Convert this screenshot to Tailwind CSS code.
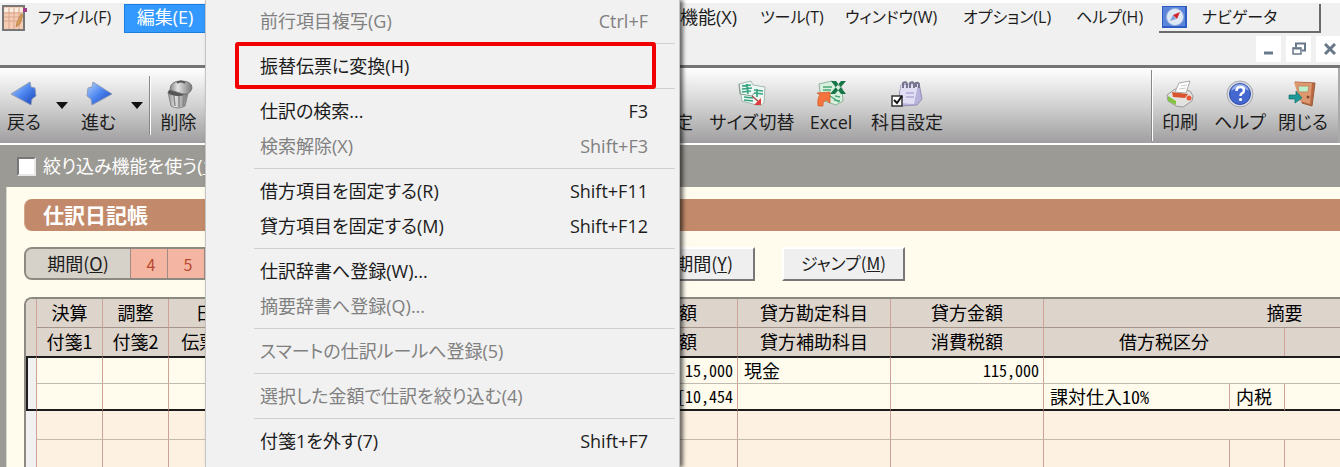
<!DOCTYPE html>
<html lang="ja">
<head>
<meta charset="utf-8">
<title>仕訳日記帳</title>
<script src="https://cdn.jsdelivr.net/npm/@tailwindcss/browser@4"></script>
</head>
<body class="relative flex h-screen flex-col overflow-hidden bg-[#9c9a94] font-['Open_Sans','Noto_Sans_CJK_JP',sans-serif] text-[18px] leading-6 text-[#1c1c1c] [font-feature-settings:'palt']">

<!-- Menu bar -->
<header class="shrink-0 border-b-3 border-[#757575] border-t-3 border-t-white bg-[#f0f0f0]">
  <nav class="flex h-[30px] items-center whitespace-nowrap text-[16px]" aria-label="メニューバー">
    <svg class="ml-[2px] w-[25px] shrink-0" viewBox="0 0 25 27">
      <rect x="1" y="1" width="21" height="24" fill="#f5cdb5" stroke="#777" stroke-width="2"/>
      <path d="M2 3h19v4H2z" fill="#fbeee0"/><path d="M2 8h19M2 12h19M2 16h19M7 3v21M12 3v21M17 3v21" stroke="#d9a58c" stroke-width="1"/>
      <path d="M19 9l2 1-3 9-4 3 1-5z" fill="#d69a55" stroke="#a8743f" stroke-width=".6"/><path d="M21 3h4v4h-4z" fill="#a03a8a"/>
    </svg>
    <button class="ml-[11px] w-[86px] shrink-0 pb-[2px] text-left">ファイル(F)</button>
    <button class="h-[29px] w-[82px] shrink-0 border border-[#1c7fe0] bg-[#3399ff] pb-[2px] text-[18px] text-white">編集(E)</button>
    <span class="w-[454px] shrink-0"></span>
    <button class="w-[77px] shrink-0 pb-[2px] text-[18px]"><span class="flex justify-end">機能(X)</span></button>
    <button class="ml-[23px] w-[85px] shrink-0 pb-[2px] text-left">ツール(T)</button>
    <button class="w-[118px] shrink-0 pb-[2px] text-left">ウィンドウ(W)</button>
    <button class="w-[113px] shrink-0 pb-[2px] text-left">オプション(L)</button>
    <button class="w-[83px] shrink-0 pb-[2px] text-left">ヘルプ(H)</button>
    <button class="flex h-[29px] w-[162px] shrink-0 items-center border-r-2 border-b-2 border-[#6b6b6b] bg-[#f0f0f0] pl-[3px]">
      <svg class="h-[22px] w-[25px]" viewBox="0 0 25 22"><rect width="25" height="22" fill="#2c5cc4"/><rect x="1" y="1" width="22" height="19" fill="#5b86dc"/><circle cx="13" cy="11" r="8.5" fill="#dfe8f5" stroke="#9db4dc"/><path d="M8 15l3-6 3 4z" fill="#7fa0d8"/><path d="M11 9l7-3-3 7z" fill="#d2232e"/></svg>
      <span class="pl-[15px]">ナビゲータ</span>
    </button>
  </nav>
  <div class="flex h-[32px] items-center justify-end gap-[5px] pb-px">
    <button aria-label="最小化" class="grid h-[26px] w-[25px] place-items-center bg-white"><svg class="w-[16px]" viewBox="0 0 16 16"><path d="M3 12h9" stroke="#68788a" stroke-width="3"/></svg></button>
    <button aria-label="元に戻す" class="grid h-[26px] w-[25px] place-items-center bg-white"><svg class="w-[14px]" viewBox="0 0 14 14"><path d="M4 5V1.500h9v7h-3" fill="none" stroke="#68788a" stroke-width="2"/><path d="M1 6h8v6H1z" fill="#fff" stroke="#68788a" stroke-width="1.500"/><path d="M1 6.500h8" stroke="#68788a" stroke-width="2"/></svg></button>
    <button aria-label="閉じる" class="grid h-[26px] w-[24px] place-items-center bg-white"><svg class="ml-[3px] w-[12px]" viewBox="0 0 12 12"><path d="M1 1l10 10M11 1L1 11" stroke="#68788a" stroke-width="3"/></svg></button>
  </div>
</header>

<!-- Toolbar -->
<div role="toolbar" class="flex h-[77px] shrink-0 items-stretch border-b-2 border-white bg-linear-to-b from-white via-[#d2d2d2] to-[#a09ea0] whitespace-nowrap">
  <button class="flex w-[48px] shrink-0 flex-col items-center pt-[12px]">
    <svg class="h-[30px] w-[28px]" viewBox="0 0 28 30"><defs><linearGradient id="blue" x2="1" y2="1"><stop stop-color="#b4d4ff"/><stop offset=".5" stop-color="#4b84ee"/><stop offset="1" stop-color="#173fb4"/></linearGradient></defs><path d="M1 14L20 2l1 5 4 1 1 8-4 3-1 6z" fill="url(#blue)" stroke="#8f9bb8" stroke-width="1"/></svg>
    <span>戻る</span>
  </button>
  <button aria-label="戻る履歴" class="grid w-[28px] shrink-0 place-items-center"><svg class="w-[12px]" viewBox="0 0 12 7"><path d="M0 0h12L6 7z" fill="#111"/></svg></button>
  <button class="flex w-[45px] shrink-0 flex-col items-center pt-[12px]">
    <svg class="h-[30px] w-[28px]" viewBox="0 0 28 30"><path d="M27 14L8 2 7 7 3 8 2 16l4 3 1 6z" fill="url(#blue)" stroke="#8f9bb8" stroke-width="1"/></svg>
    <span>進む</span>
  </button>
  <button aria-label="進む履歴" class="grid w-[28px] shrink-0 place-items-center pl-[3px]"><svg class="w-[12px]" viewBox="0 0 12 7"><path d="M0 0h12L6 7z" fill="#111"/></svg></button>
  <span class="my-[8px] w-[2px] shrink-0 border-l border-[#888] bg-white"></span>
  <button class="flex w-[55px] shrink-0 flex-col items-center pt-[12px]">
    <svg class="h-[30px] w-[28px]" viewBox="0 0 28 30"><defs><linearGradient id="can"><stop stop-color="#888"/><stop offset=".35" stop-color="#e4e4e4"/><stop offset="1" stop-color="#777"/></linearGradient></defs><path d="M3 12l3 14q7 4 14 0l3-13z" fill="url(#can)" stroke="#888"/><path d="M9 16l1 10M14 16v11M19 16l-1 10" stroke="#888" stroke-width="1.500"/><ellipse cx="13" cy="12" rx="10" ry="4" fill="#555"/><path d="M5 10Q5 1 16 1q11 0 11 7-2 7-9 6z" fill="url(#can)" stroke="#777"/><path d="M12 3q4-3 8 0" fill="none" stroke="#555" stroke-width="2"/></svg>
    <span>削除</span>
  </button>
  <span class="w-[451px] shrink-0"></span>
  <button class="flex w-[36px] shrink-0 flex-col items-center pt-[42px]"><span>設定</span></button>
  <button class="ml-[10px] flex w-[98px] shrink-0 flex-col items-center pt-[12px]">
    <svg class="h-[30px] w-[30px]" viewBox="0 0 30 30"><path d="M2 4l12-3 2 4 12 2-1 16-4 3L5 21z" fill="#eef8f3" stroke="#a4b8ae"/><path d="M5 6l9-1M5 9l10-1M5 12l9-1M10 4l1 10M17 10l9 1M17 13l9 1M7 17l9 1M7 20l9 1M20 9v8" stroke="#37a482" stroke-width="1.700"/><path d="M2 4l1 10 12 2 3-4" fill="none" stroke="#849c90"/><path d="M15 16l7 6" stroke="#a84a4a" stroke-width="1.500"/><path d="M24 18v7h-7z" fill="#dc3d3d"/></svg>
    <span>サイズ切替</span>
  </button>
  <button class="flex w-[60px] shrink-0 flex-col items-center pt-[12px]">
    <svg class="h-[30px] w-[32px]" viewBox="0 0 32 30"><path d="M4 4l13-3 10 7 1 13-7 4L6 20z" fill="#d9f0df" stroke="#8db39c"/><path d="M8 7h9M8 10h8M20 16l5 1M19 20l6 1M12 14l12 8" stroke="#49a877" stroke-width="1.500"/><path d="M16 1h5l10 13h-5zM31 1h-5L15 14h5z" fill="#167647"/><path d="M3 26q-1-8 2-11l-3-2 13-1v11l-4-3q-4 2-3 6z" fill="#f4733e" stroke="#d45720" stroke-width=".7"/></svg>
    <span>Excel</span>
  </button>
  <button class="flex w-[92px] shrink-0 flex-col items-center pt-[12px]">
    <svg class="h-[30px] w-[32px]" viewBox="0 0 32 30"><path d="M10 5l18-2 3 16-5 6-15 1-3-9z" fill="#b8b3dc" stroke="#9390b5"/><path d="M10 5l17-1-4 20-15-1z" fill="#e2dff5"/><path d="M12 8V3q3-2 4 1v4M19 8V3q3-2 4 1v4M25 7V3q3-1 3 2v3" fill="none" stroke="#77758e" stroke-width="2"/><path d="M15 13h8M15 17h8" stroke="#bcb8dd" stroke-width="2"/><rect x="1" y="16" width="10" height="10" fill="#fff" stroke="#333" stroke-width="1.500"/><path d="M3 20l3 3 5-7" fill="none" stroke="#111" stroke-width="2"/></svg>
    <span>科目設定</span>
  </button>
  <span class="mt-[2px] mb-[2px] ml-auto w-[2px] shrink-0 border-l border-[#888] bg-white"></span>
  <button class="flex w-[54px] shrink-0 flex-col items-center pt-[12px]">
    <svg class="h-[30px] w-[30px]" viewBox="0 0 30 30"><path d="M2 15l8-6 15 2 3 5-1 5-9 6-7-1-8-5z" fill="#e4e2e0" stroke="#999"/><path d="M7 12l16 2-3 4-12-1z" fill="#d9552f"/><path d="M10 12l4-9 11-2-4 12z" fill="#fff" stroke="#aaa"/><path d="M16 6l6-1M14 9l7-1" stroke="#ccc"/><path d="M3 16l8 5v4l-8-4z" fill="#82c341"/><circle cx="24" cy="18" r="2.500" fill="#e8593a"/></svg>
    <span>印刷</span>
  </button>
  <button class="flex w-[66px] shrink-0 flex-col items-center pt-[12px]">
    <svg class="h-[30px] w-[28px]" viewBox="0 0 28 30"><circle cx="14" cy="14" r="13" fill="#d9dbe2" stroke="#a5a7b0"/><circle cx="14" cy="14" r="10.500" fill="#4468cf" stroke="#2c4aa6"/><path d="M5 11q9-7 18 0-2-7-9-7t-9 7z" fill="#95aeea"/><path d="M10.500 11q0-4 4-4 3.500 0 3.500 3.200 0 2-2.200 3.200-1.300.7-1.300 2.600" fill="none" stroke="#fff" stroke-width="2.500"/><circle cx="14.500" cy="19.500" r="1.600" fill="#fff"/></svg>
    <span>ヘルプ</span>
  </button>
  <button class="flex w-[60px] shrink-0 flex-col items-center pt-[12px]">
    <svg class="h-[30px] w-[30px]" viewBox="0 0 30 30"><path d="M7 2l20 1-3 23-10-3V6z" fill="#b96a44" stroke="#9c5a38"/><path d="M6 2l18 1-2 21-10-3z" fill="#dd9870"/><path d="M10 6h11l-1 6h-9z" fill="#baf0cc" stroke="#c78967"/><circle cx="20" cy="17" r="1.500" fill="#7f4a2c"/><path d="M1 15h7v-4l6 7-7 5v-4H1z" fill="#1d9a97" stroke="#137171" stroke-width=".7"/></svg>
    <span>閉じる</span>
  </button>
  <span class="w-[7px] shrink-0 border-r-2 border-[#aaa]"></span>
</div>

<!-- Filter strip -->
<div class="flex h-[42px] shrink-0 items-center pl-[17px] whitespace-nowrap text-white">
  <input id="narrow" type="checkbox" class="h-[19px] w-[19px] appearance-none border-2 border-t-[#777] border-r-[#e8e8e8] border-b-[#e8e8e8] border-l-[#777] bg-white">
  <label for="narrow" class="pl-[7px]">絞り込み機能を使う(<u>1</u>)</label>
</div>

<!-- Journal sheet -->
<main class="ml-[6px] min-h-0 flex-1 overflow-hidden border-l border-[#d8d6cc] bg-[#fffcee] pt-[12px] pl-[17px] font-['Noto_Sans_CJK_JP',sans-serif]">
  <h1 class="flex h-[32px] items-center rounded-l-lg border-l border-[#d3a58b] bg-[#c28a6a] pb-[2px] pl-[18px] text-[21px] font-bold text-white">仕訳日記帳</h1>

  <div class="mt-[16px] flex h-[34px] items-stretch whitespace-nowrap">
    <div class="flex h-[33px] w-[555px] shrink-0 overflow-hidden rounded-lg border-2 border-[#8c8a83] bg-[#f5b5a3]">
      <button class="w-[105px] border-r border-[#a08c84] bg-[#d6d1c9] pb-[2px]">期間(<u>O</u>)</button>
      <button class="w-[37px] border-r border-[#a08c84] pl-[4px] text-[16px] text-[#b8492c]">4</button>
      <button class="w-[37px] border-r border-[#a08c84] pl-[4px] text-[16px] text-[#b8492c]">5</button>
    </div>
    <button class="ml-[53px] w-[123px] shrink-0 border-2 border-t-white border-r-[#777] border-b-[#777] border-l-white bg-[#efefef] pr-[20px] pb-[2px] text-right">期間(<u>Y</u>)</button>
    <button class="ml-[27px] w-[123px] shrink-0 border-2 border-t-white border-r-[#777] border-b-[#777] border-l-white bg-[#efefef] pb-[2px] text-[17px]">ジャンプ(<u>M</u>)</button>
  </div>

  <div class="mt-[16px] w-[1502px] overflow-hidden rounded-tl-lg border-t-2 border-l-2 border-[#8b8982]">
    <table class="w-[1500px] table-fixed border-separate border-spacing-0 text-[18px] leading-5 text-black [&_td]:border-r [&_td]:border-[#cfa297] [&_td]:border-b-[#c2bcb0] [&_td]:p-0 [&_td]:pb-[2px] [&_th]:border-r [&_th]:border-r-[#cfa297] [&_th]:bg-[#ddd5cc] [&_th]:p-0 [&_th]:pb-[2px] [&_th]:font-normal">
      <colgroup><col class="w-[11px]"><col class="w-[66px]"><col class="w-[66px]"><col class="w-[90px]"><col class="w-[326px]"><col class="w-[153px]"><col class="w-[153px]"><col class="w-[153px]"><col class="w-[186px]"><col class="w-[55px]"><col class="w-[241px]"></colgroup>
      <thead>
        <tr class="h-[29px] [&>th]:border-b [&>th]:border-b-[#a5948c]"><th rowspan="2" class="border-b-0!"></th><th>決算</th><th>調整</th><th>日付</th><th></th><th>借方金額</th><th>貸方勘定科目</th><th>貸方金額</th><th colspan="3">摘要</th></tr>
        <tr class="h-[28px]"><th>付箋1</th><th>付箋2</th><th>伝票No.</th><th></th><th>消費税額</th><th>貸方補助科目</th><th>消費税額</th><th colspan="2">借方税区分</th><th></th></tr>
      </thead>
      <tbody>
        <tr class="h-[28px] bg-[#fffcee] [&>td]:border-t-2 [&>td]:border-t-[#1c1c1c] [&>td]:border-b"><td rowspan="2" class="border-b-2! border-l-2 border-b-[#1c1c1c]! border-l-[#1c1c1c]! bg-[#f1f1f1]"></td><td></td><td></td><td></td><td></td><td class="pr-[4px]! text-right text-[16px] [font-feature-settings:'hwid']">15,000</td><td class="pl-[6px]!">現金</td><td class="pr-[4px]! text-right text-[16px] [font-feature-settings:'hwid']">115,000</td><td colspan="3"></td></tr>
        <tr class="h-[27px] bg-[#fffcee] [&>td]:border-b-2 [&>td]:border-b-[#1c1c1c]"><td></td><td></td><td></td><td></td><td class="pr-[4px]! text-right text-[16px] [font-feature-settings:'hwid']">[10,454</td><td></td><td></td><td class="pl-[6px]! [font-feature-settings:'hwid']">課対仕入10%</td><td class="pl-[6px]!">内税</td><td></td></tr>
        <tr class="h-[29px] bg-[#fdf2e1] [&>td]:border-b"><td rowspan="2" class="bg-[#f1f1f1]"></td><td></td><td></td><td></td><td></td><td></td><td></td><td></td><td colspan="3"></td></tr>
        <tr class="h-[28px] bg-[#fdf2e1]"><td></td><td></td><td></td><td></td><td></td><td></td><td></td><td></td><td></td><td></td></tr>
      </tbody>
    </table>
  </div>
</main>

<!-- Open Edit menu -->
<div role="menu" aria-label="編集" class="absolute inset-y-0 left-[205px] w-[475px] border-r border-l border-[#c4c4c4] bg-[#f1f1f1] pt-[3px] pr-[4px] pl-[48px] whitespace-nowrap shadow-[3px_0_4px_rgba(0,0,0,0.6)] [&>button]:flex [&>button]:h-[35px] [&>button]:w-full [&>button]:items-center [&>button]:justify-between [&>button]:pr-[27px] [&>button]:pl-[6px] [&>button:disabled]:text-[#808080] [&>hr]:mt-[5px] [&>hr]:mb-[4px] [&>hr]:border-t [&>hr]:border-[#d0d0d0]">
  <button role="menuitem" disabled><span>前行項目複写(G)</span><span>Ctrl+F</span></button>
  <hr>
  <button role="menuitem" class="relative"><span>振替伝票に変換(H)</span><span class="pointer-events-none absolute -top-[6px] right-[19px] -bottom-[6px] -left-[19px] rounded-[3px] border-4 border-[#f00000]"></span></button>
  <hr>
  <button role="menuitem"><span>仕訳の検索...</span><span>F3</span></button>
  <button role="menuitem" disabled><span>検索解除(X)</span><span>Shift+F3</span></button>
  <hr>
  <button role="menuitem"><span>借方項目を固定する(R)</span><span>Shift+F11</span></button>
  <button role="menuitem"><span>貸方項目を固定する(M)</span><span>Shift+F12</span></button>
  <hr>
  <button role="menuitem"><span>仕訳辞書へ登録(W)...</span></button>
  <button role="menuitem" disabled><span>摘要辞書へ登録(Q)...</span></button>
  <hr>
  <button role="menuitem" disabled><span>スマートの仕訳ルールへ登録(5)</span></button>
  <hr>
  <button role="menuitem" disabled><span>選択した金額で仕訳を絞り込む(4)</span></button>
  <hr>
  <button role="menuitem"><span>付箋1を外す(7)</span><span>Shift+F7</span></button>
</div>
</body>
</html>
